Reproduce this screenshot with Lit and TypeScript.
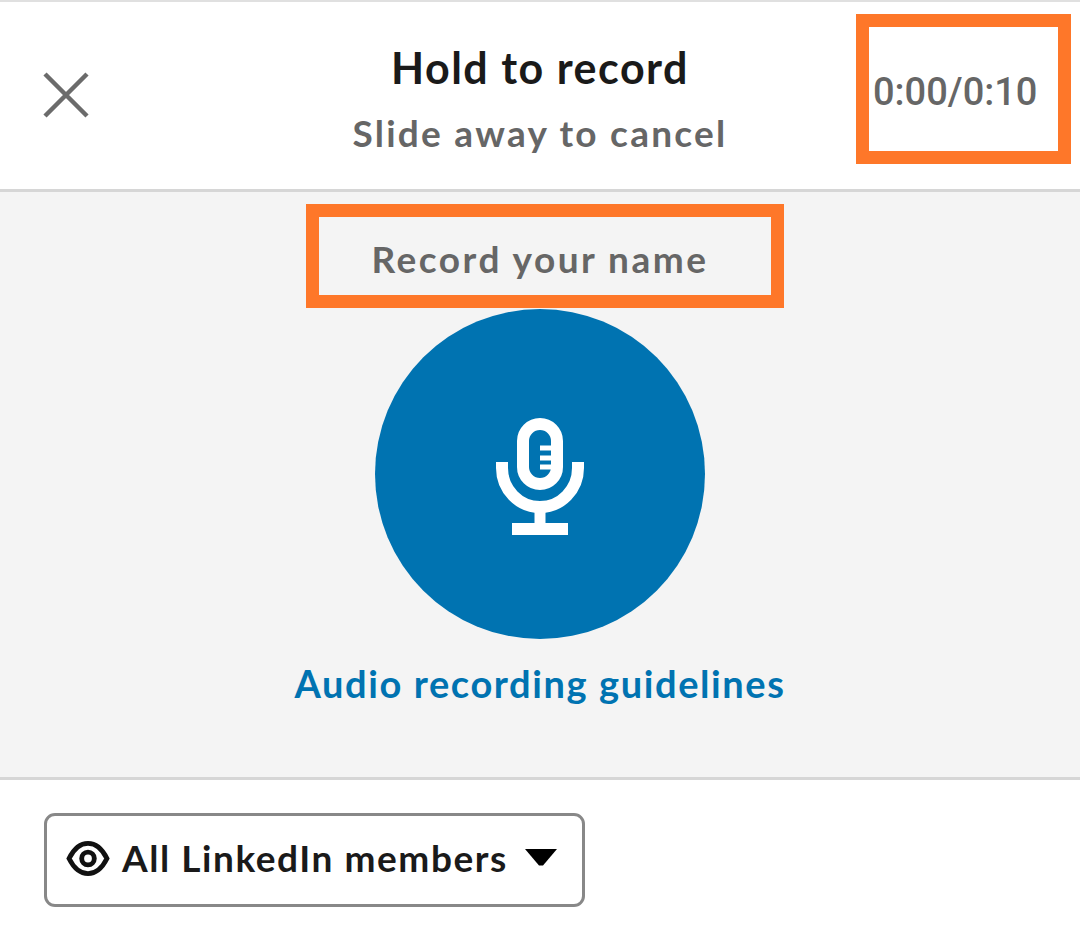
import { LitElement, html, css } from "lit";
import { customElement } from "lit/decorators.js";

@customElement("app-root")
export class AppRoot extends LitElement {
  static styles = css`
    :host { display: block; width: 1080px; height: 940px; background: #fff; font-family: Lato, "Liberation Sans", sans-serif; overflow: hidden; }
    .header {
      box-sizing: border-box; height: 192px; border-top: 2px solid #e0e0e0; border-bottom: 3px solid #d6d6d6;
      display: grid; grid-template-columns: 1fr auto 1fr; align-items: start;
    }
    .close { margin: 70px 0 0 43px; width: 46px; height: 46px; display: block; }
    .titles { text-align: center; margin-top: 41px; }
    .title { font-size: 43px; line-height: 50px; font-weight: 700; color: #1a1a1a; letter-spacing: 1.5px; }
    .sub { font-size: 37px; line-height: 44px; margin-top: 18px; font-weight: 700; color: #666; letter-spacing: 2.25px; }
    .timer {
      justify-self: end; margin: 12px 9px 0 0; box-sizing: border-box; width: 215px; height: 150px;
      border: 13px solid #fe7729; display: flex; align-items: center; padding: 6px 0 0 4px;
      font-family: Roboto, sans-serif; font-weight: 500; font-size: 38px; color: #666;
    }
    .main {
      box-sizing: border-box; height: 588px; background: #f4f4f4; border-bottom: 3px solid #d6d6d6;
      display: flex; flex-direction: column; align-items: center; padding-top: 12px;
    }
    .prompt {
      box-sizing: border-box; width: 478px; height: 104px; border: 13px solid #fe7729; margin-left: 10px;
      display: flex; align-items: center; justify-content: center; padding: 5px 10px 0 0;
      font-size: 37px; font-weight: 700; color: #666; letter-spacing: 2.5px;
    }
    .mic-btn {
      width: 330px; height: 330px; border-radius: 50%; background: #0073b1; margin-top: 1px;
      display: flex; align-items: center; justify-content: center; flex: none;
    }
    .mic { width: 330px; height: 330px; display: block; }
    .link { margin-top: 21px; font-size: 38px; line-height: 46px; font-weight: 700; color: #0073b1; letter-spacing: 1.6px; }
    .footer { padding: 33px 0 0 44px; }
    .pill {
      box-sizing: border-box; width: 541px; height: 94px; border: 3px solid #888; border-radius: 11px;
      display: flex; align-items: center; padding: 0 0 0 19px; gap: 12px;
      font-size: 37px; font-weight: 700; color: #1a1a1a; letter-spacing: 1.55px;
    }
    .pill span { position: relative; top: -3px; }
    .eye { width: 44px; height: 35px; flex: none; margin-top: -4px; }
    .caret { width: 32px; height: 17px; flex: none; margin: -6px 0 0 5px; }
  `;

  render() {
    return html`
      <div class="header">
        <svg class="close" viewBox="0 0 46 46" fill="none" stroke="#6b6b6b" stroke-width="4.5">
          <path d="M2 2 L44 44 M44 2 L2 44" />
        </svg>
        <div class="titles">
          <div class="title">Hold to record</div>
          <div class="sub">Slide away to cancel</div>
        </div>
        <div class="timer">0:00/0:10</div>
      </div>
      <div class="main">
        <div class="prompt">Record your name</div>
        <div class="mic-btn">
          <svg class="mic" viewBox="375 309 330 330" fill="none" stroke="#fff">
            <rect x="523" y="424" width="34" height="60" rx="17" stroke-width="12" />
            <path d="M540 448H552M540 458H552M540 467H552" stroke-width="5" />
            <path d="M502 462V468A38 39 0 0 0 578 468V462" stroke-width="12" />
            <path d="M540 506V528" stroke-width="11" />
            <path d="M512 529H568" stroke-width="12" />
          </svg>
        </div>
        <div class="link">Audio recording guidelines</div>
      </div>
      <div class="footer">
        <div class="pill">
          <svg class="eye" viewBox="0 0 44 36" fill="none" stroke="#111" stroke-width="5">
            <path d="M2.5 18C8 7 15 2.5 22 2.5S36 7 41.5 18C36 29 29 33.5 22 33.5S8 29 2.5 18Z" />
            <circle cx="22" cy="18" r="6.5" />
          </svg>
          <span>All LinkedIn members</span>
          <svg class="caret" viewBox="0 0 32 17" preserveAspectRatio="none"><path d="M0 0H32L18 16.5H14Z" fill="#000" /></svg>
        </div>
      </div>
    `;
  }
}
